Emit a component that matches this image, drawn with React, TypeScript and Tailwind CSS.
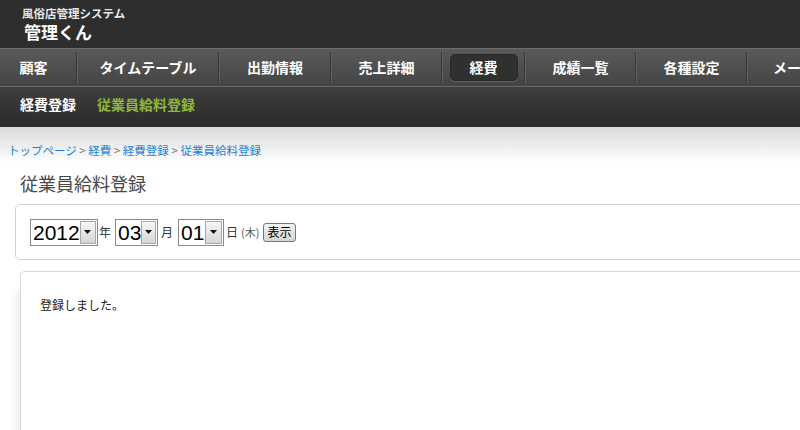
const jp = "font-['Noto_Sans_CJK_JP','Liberation_Sans',sans-serif]";

const navItems = [
  { label: "顧客", w: "w-[76px]", extra: "pr-[9px]" },
  { label: "タイムテーブル", w: "w-[140px]", extra: "" },
  { label: "出勤情報", w: "w-[110px]", extra: "" },
  { label: "売上詳細", w: "w-[109px]", extra: "" },
  { label: "経費", w: "w-[81px]", extra: "", active: true },
  { label: "成績一覧", w: "w-[109px]", extra: "" },
  { label: "各種設定", w: "w-[109px]", extra: "" },
  { label: "メール設定", w: "w-[130px]", extra: "justify-start pl-[25px]" },
];

const FakeSelect = ({ value, w }: { value: string; w: string }) => (
  <span className={`inline-flex h-[27px] ${w} items-stretch border border-[#8a8a8a] bg-white`}>
    <span className="flex flex-1 items-center pl-[2px] font-['Liberation_Sans',Arial,sans-serif] text-[21px] leading-none text-black">
      {value}
    </span>
    <span className="my-[1px] mr-[1px] flex w-[17px] items-center justify-center border border-[#a8a8a8] bg-[linear-gradient(#f6f6f6,#d6d6d6)]">
      <svg width="7" height="4" viewBox="0 0 7 4">
        <path d="M0 0h7L3.5 4z" fill="#111" />
      </svg>
    </span>
  </span>
);

const Separator = () => (
  <span className="flex h-[31px] self-center">
    <span className="w-px bg-[#383838]" />
    <span className="w-px bg-[#626262]" />
  </span>
);

export default function App() {
  return (
    <div className={`h-[430px] w-[800px] overflow-hidden bg-white ${jp}`}>
      {/* header */}
      <div className="h-[48px] bg-[#2e2e2e] pl-[22px] pt-[5px] text-white">
        <div className="text-[11.5px] font-bold leading-[16px] text-[#e8e8e8]">風俗店管理システム</div>
        <div className="ml-[2px] text-[17px] font-bold leading-[22px]">管理くん</div>
      </div>

      {/* main nav */}
      <div className="flex h-[39px] w-[960px] border-t border-b border-t-[#6c6c6c] border-b-[#6a6a6a] bg-[linear-gradient(#5a5a5a,#444444)]">
        {navItems.map((item, i) => (
          <div key={item.label} className="flex">
            {i > 0 && <Separator />}
            <div className={`flex ${item.w} items-center justify-center ${item.extra}`}>
              {item.active ? (
                <span className="flex h-[27px] w-[68px] items-center justify-center rounded-[5px] border border-[#262626] bg-[#303030] text-[14px] font-bold text-white shadow-[0_1px_0_rgba(255,255,255,0.15)]">
                  {item.label}
                </span>
              ) : (
                <span className="text-[14px] font-bold text-white">{item.label}</span>
              )}
            </div>
          </div>
        ))}
      </div>

      {/* sub nav */}
      <div className="flex h-[40px] items-center gap-[21px] bg-[linear-gradient(#3e3e3e,#2b2b2b)] pb-[5px] pl-[20px] text-[14px] font-bold">
        <span className="text-white">経費登録</span>
        <span className="text-[#8fb83a]">従業員給料登録</span>
      </div>

      {/* content */}
      <div className="w-[960px] bg-[linear-gradient(#dadada,#ffffff_36px)] pt-[16px]">
        <div className="pl-[8px] text-[11.5px] leading-[14px] text-[#1a7fd6]">
          トップページ <span className="text-[#777]">&gt;</span> 経費 <span className="text-[#777]">&gt;</span> 経費登録{" "}
          <span className="text-[#777]">&gt;</span> 従業員給料登録
        </div>
        <h1 className="mt-[16px] pl-[20px] text-[18px] leading-[20px] text-[#484848]">従業員給料登録</h1>

        <div className="mt-[11px] ml-[15px] flex h-[56px] items-center rounded-[5px] border border-[#d2d2d2] pl-[14px]">
          <div className="flex items-center text-[12px] text-[#333]">
            <FakeSelect value="2012" w="w-[68px]" />
            <span className="ml-[1px] mr-[4px]">年</span>
            <FakeSelect value="03" w="w-[43px]" />
            <span className="ml-[3px] mr-[5px]">月</span>
            <FakeSelect value="01" w="w-[46px]" />
            <span className="ml-[2px]">日</span>
            <span className="ml-[3px] text-[11px] text-[#555]">(木)</span>
            <button className="ml-[4px] h-[19px] rounded-[3px] border border-[#777] bg-[linear-gradient(#f4f4f4,#d4d4d4)] px-[3px] text-[12px] leading-[16px] text-black">
              表示
            </button>
          </div>
        </div>

        <div className="mt-[11px] ml-[20px] h-[200px] rounded-tl-[5px] border border-[#d6d6d6] pt-[24px] pl-[19px] text-[12px] text-[#222] shadow-[-8px_14px_10px_-6px_rgba(0,0,0,0.1)]">
          登録しました。
        </div>
      </div>
    </div>
  );
}
